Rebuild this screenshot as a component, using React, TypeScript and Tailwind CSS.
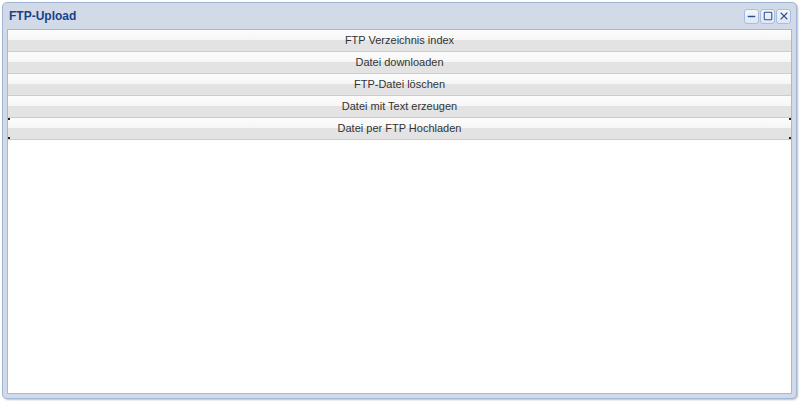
import { Minus, Square, X } from "lucide-react";

const actions = [
  "FTP Verzeichnis index",
  "Datei downloaden",
  "FTP-Datei löschen",
  "Datei mit Text erzeugen",
  "Datei per FTP Hochladen",
];

function ToolButton({ children }: { children: React.ReactNode }) {
  return (
    <span className="w-[15px] h-[15px] flex items-center justify-center rounded-[3px] border border-[#a8bde0] bg-gradient-to-b from-[#f4f7fc] to-[#dfe7f4] text-[#2f4f93]">
      {children}
    </span>
  );
}

export default function App() {
  return (
    <div
      className="w-[800px] h-[402px] bg-white pt-[2px] pl-[2px]"
      style={{ fontFamily: '"Liberation Sans", Arial, sans-serif' }}
    >
      <div className="w-[795px] h-[397px] flex flex-col rounded-[5px] border border-[#9fb6d9] bg-[#d2dae7] shadow-[1px_1px_2px_rgba(0,0,0,0.25)]">
        <div className="h-[26px] flex items-center justify-between pl-[6px] pr-[5px] shrink-0">
          <span className="text-[12px] font-bold text-[#15428b]">FTP-Upload</span>
          <div className="flex gap-[1px]">
            <ToolButton>
              <Minus size={11} strokeWidth={3} />
            </ToolButton>
            <ToolButton>
              <Square size={10} strokeWidth={2.5} />
            </ToolButton>
            <ToolButton>
              <X size={12} strokeWidth={2.25} />
            </ToolButton>
          </div>
        </div>
        <div className="flex-1 mx-[4px] mb-[4px] border border-[#99bbe8] bg-white flex flex-col">
          {actions.map((label, i) => (
            <button
              key={label}
              className="relative h-[22px] w-full flex items-center justify-center text-[11px] text-[#333] border-b border-[#cccccc] bg-[linear-gradient(#fcfcfc_0%,#f6f6f6_48%,#e3e3e3_50%,#e3e3e3_100%)]"
            >
              {i === actions.length - 1 && (
                <>
                  <span className="absolute left-0 top-0 w-[2px] h-[2px] bg-[#222]" />
                  <span className="absolute right-0 top-0 w-[2px] h-[2px] bg-[#222]" />
                  <span className="absolute left-0 bottom-0 w-[2px] h-[2px] bg-[#222]" />
                  <span className="absolute right-0 bottom-0 w-[2px] h-[2px] bg-[#222]" />
                </>
              )}
              {label}
            </button>
          ))}
        </div>
      </div>
    </div>
  );
}
